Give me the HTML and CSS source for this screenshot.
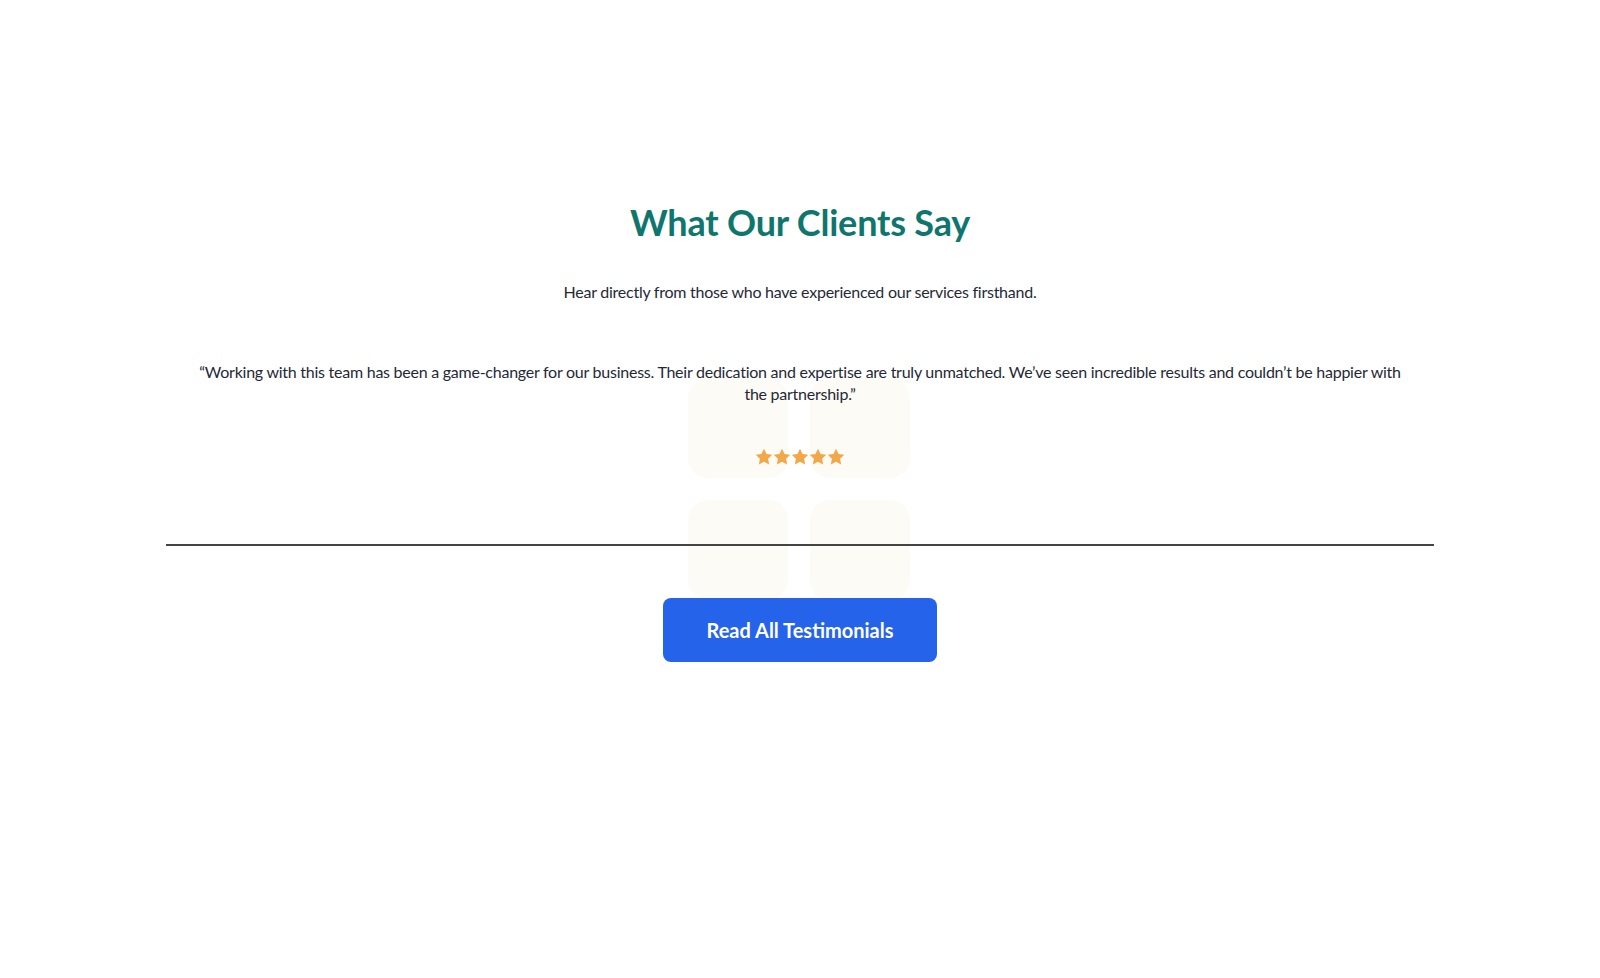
FILE: index.html
```html
<!DOCTYPE html>
<html>
<head>
    <title>Testimonials</title>
    <link rel="stylesheet" href="styles.css">
</head>
<body>
    <section class="testimonials">
        <div class="deco-grid">
            <span></span><span></span><span></span><span></span>
        </div>
        <h2>What Our Clients Say</h2>
        <p class="subtitle">Hear directly from those who have experienced our services firsthand.</p>
        <blockquote class="quote">“Working with this team has been a game-changer for our business. Their dedication and expertise are truly unmatched. We’ve seen incredible results and couldn’t be happier with the partnership.”</blockquote>
        <div class="stars">
            <svg viewBox="0 0 24 24"><path d="M12 1l3.4 6.9 7.6 1.1-5.5 5.3 1.3 7.6L12 18.3l-6.8 3.6 1.3-7.6L1 9l7.6-1.1z"/></svg>
            <svg viewBox="0 0 24 24"><path d="M12 1l3.4 6.9 7.6 1.1-5.5 5.3 1.3 7.6L12 18.3l-6.8 3.6 1.3-7.6L1 9l7.6-1.1z"/></svg>
            <svg viewBox="0 0 24 24"><path d="M12 1l3.4 6.9 7.6 1.1-5.5 5.3 1.3 7.6L12 18.3l-6.8 3.6 1.3-7.6L1 9l7.6-1.1z"/></svg>
            <svg viewBox="0 0 24 24"><path d="M12 1l3.4 6.9 7.6 1.1-5.5 5.3 1.3 7.6L12 18.3l-6.8 3.6 1.3-7.6L1 9l7.6-1.1z"/></svg>
            <svg viewBox="0 0 24 24"><path d="M12 1l3.4 6.9 7.6 1.1-5.5 5.3 1.3 7.6L12 18.3l-6.8 3.6 1.3-7.6L1 9l7.6-1.1z"/></svg>
        </div>
        <hr class="divider">
        <a href="#" class="btn">Read All Testimonials</a>
    </section>
</body>
</html>
```

FILE: styles.css
```css
body {
    font-family: Lato, "Noto Sans", sans-serif;
    background-color: white;
    margin: 0;
    color: #1f2937;
}
.testimonials {
    position: relative;
    max-width: 1268px;
    margin: 0 auto;
    padding-top: 200px;
    display: flex;
    flex-direction: column;
    align-items: center;
    text-align: center;
}
.deco-grid {
    position: absolute;
    top: 378px;
    left: 50%;
    margin-left: -112px;
    display: grid;
    grid-template-columns: 100px 100px;
    grid-auto-rows: 100px;
    gap: 22px;
    z-index: -1;
}
.deco-grid span {
    background-color: #fdfbf5;
    border-radius: 20px;
}
.testimonials h2 {
    color: #0f766e;
    font-size: 36px;
    font-weight: 700;
    line-height: 44px;
    letter-spacing: -0.2px;
    margin: 0;
}
.subtitle {
    font-size: 16px;
    line-height: 24px;
    letter-spacing: -0.25px;
    margin: 36px 0 0;
}
.quote {
    font-size: 16px;
    line-height: 22px;
    letter-spacing: -0.25px;
    margin: 57px 0 0;
    padding: 0 24px;
}
.stars {
    display: flex;
    margin-top: 43px;
}
.stars svg {
    width: 18px;
    height: 18px;
    fill: #f2a848;
}
.divider {
    width: 100%;
    border: none;
    border-top: 2px solid #444;
    margin: 78px 0 0;
}
.btn {
    margin-top: 52px;
    background-color: #2563eb;
    color: white;
    text-decoration: none;
    font-size: 20px;
    font-weight: 700;
    padding: 20px 43px;
    border-radius: 8px;
}
```
